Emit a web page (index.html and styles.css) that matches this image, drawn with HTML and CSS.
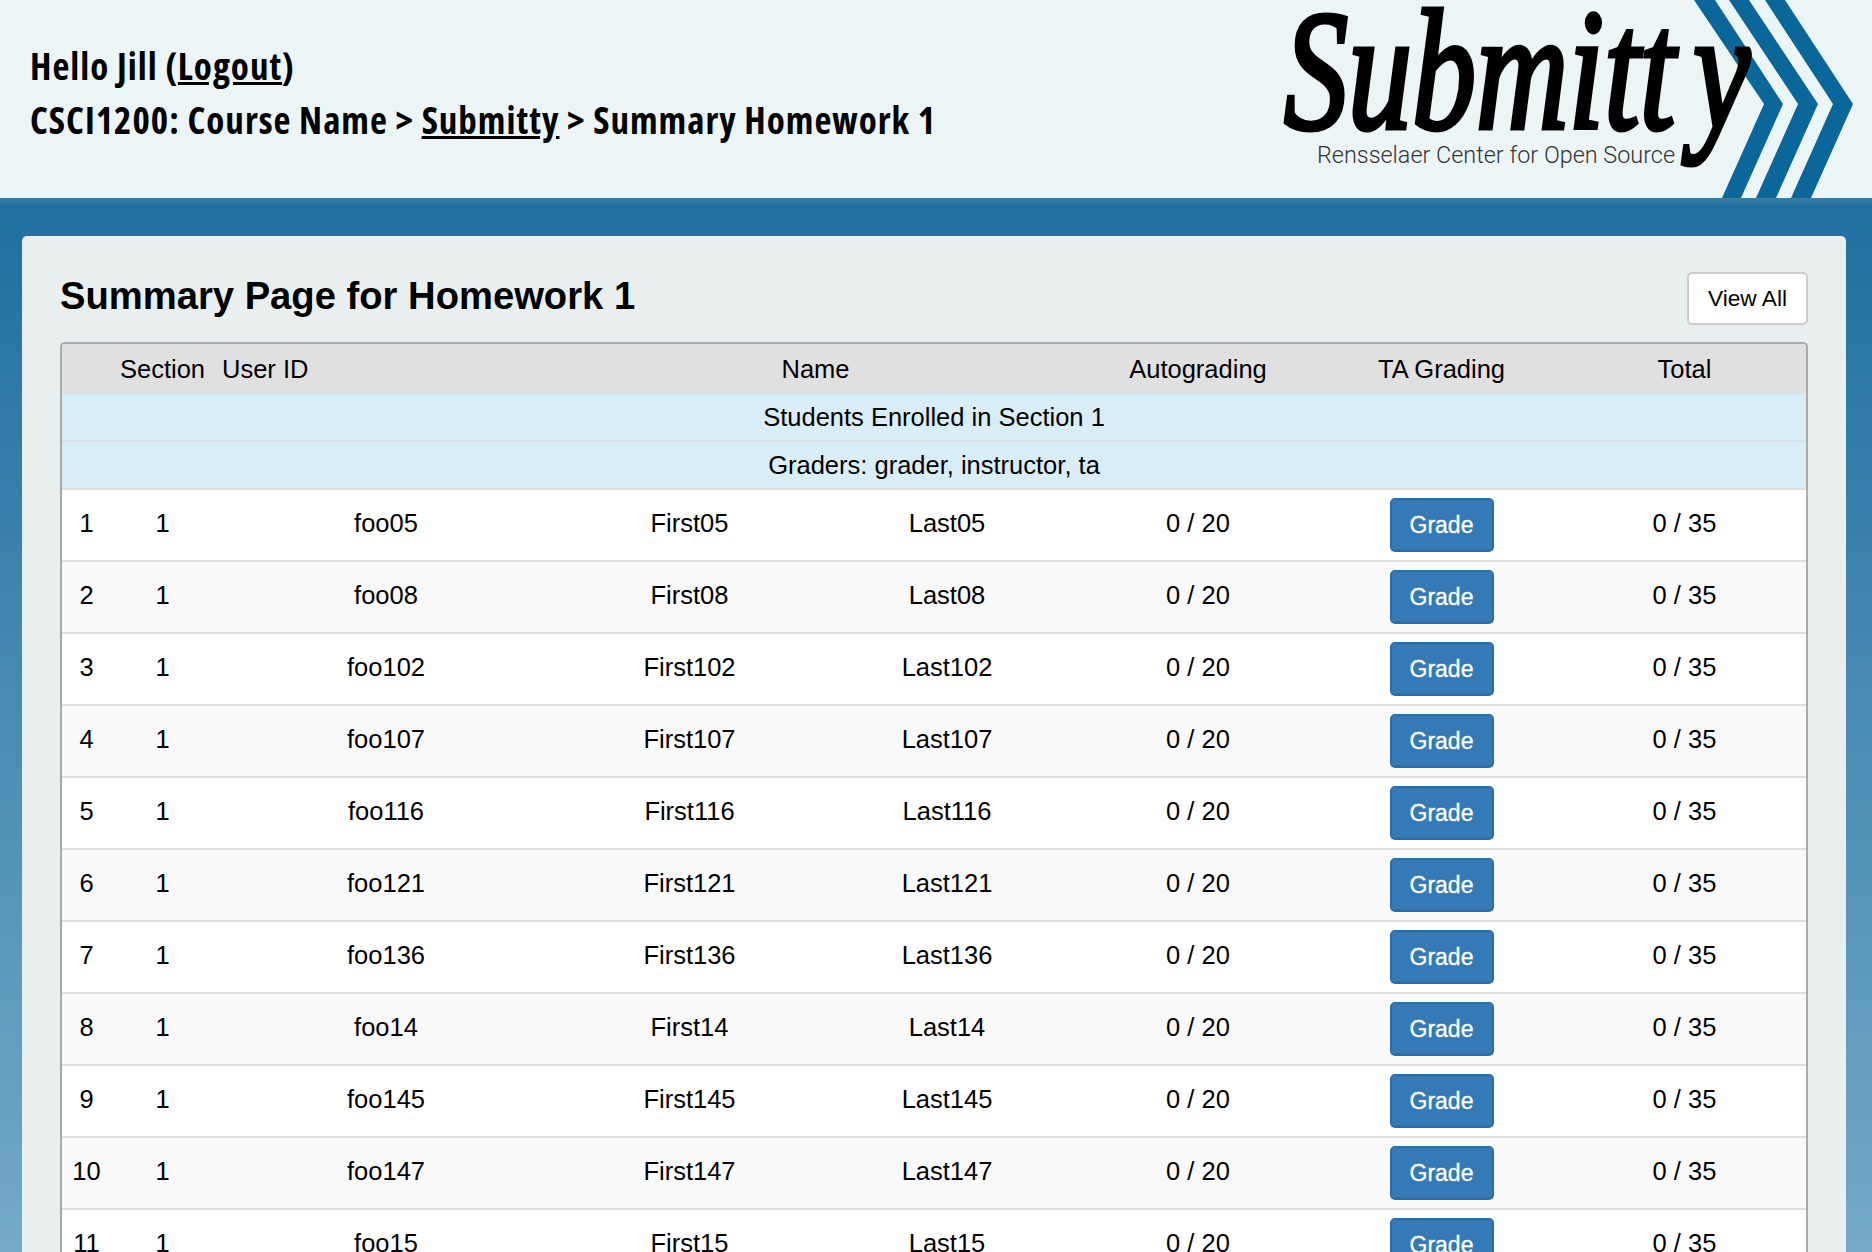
FILE: index.html
```html
<!DOCTYPE html>
<html lang="en">

<head>
    <meta charset="UTF-8">
    <title>Submitty - Summary Page</title>
    <link rel="stylesheet" href="styles.css">
</head>

<body>
    <header class="site-header">
        <div class="breadcrumbs">
            <p>Hello Jill (<a href="#">Logout</a>)</p>
            <p>CSCI1200: Course Name &gt; <a href="#">Submitty</a> &gt; Summary Homework 1</p>
        </div>
        <svg class="logo" viewBox="1272 0 600 198" width="600" height="198">
            <polygon class="chevron" points="1694,0 1715,0 1783,104 1741,198 1722,198 1764,104" />
            <polygon class="chevron" points="1729,0 1749,0 1818,104 1776,198 1756,198 1798,104" />
            <polygon class="chevron" points="1765,0 1785,0 1853,104 1811,198 1791,198 1833,104" />
            <text class="logo-name" x="1284" y="128" textLength="466" lengthAdjust="spacingAndGlyphs">Submitt<tspan dx="24">y</tspan></text>
            <text class="logo-tag" x="1317" y="163" textLength="358" lengthAdjust="spacingAndGlyphs">Rensselaer Center for Open Source</text>
        </svg>
    </header>

    <main class="content">
        <div class="title-row">
            <h1>Summary Page for Homework 1</h1>
            <a class="view-all" href="#">View All</a>
        </div>

        <div class="table-wrap">
            <table class="summary">
                <colgroup>
                    <col class="col-num">
                    <col class="col-section">
                    <col class="col-user">
                    <col class="col-first">
                    <col class="col-last">
                    <col class="col-auto">
                    <col class="col-ta">
                    <col class="col-total">
                </colgroup>
                <thead>
                    <tr>
                        <th></th>
                        <th>Section</th>
                        <th class="left">User ID</th>
                        <th colspan="2">Name</th>
                        <th>Autograding</th>
                        <th>TA Grading</th>
                        <th class="total">Total</th>
                    </tr>
                </thead>
                <tbody>
                    <tr class="info">
                        <td colspan="8">Students Enrolled in Section 1</td>
                    </tr>
                    <tr class="info">
                        <td colspan="8">Graders: grader, instructor, ta</td>
                    </tr>
                    <tr>
                        <td>1</td><td>1</td><td>foo05</td><td>First05</td><td>Last05</td><td>0 / 20</td>
                        <td><a class="grade" href="#">Grade</a></td><td class="total">0 / 35</td>
                    </tr>
                    <tr>
                        <td>2</td><td>1</td><td>foo08</td><td>First08</td><td>Last08</td><td>0 / 20</td>
                        <td><a class="grade" href="#">Grade</a></td><td class="total">0 / 35</td>
                    </tr>
                    <tr>
                        <td>3</td><td>1</td><td>foo102</td><td>First102</td><td>Last102</td><td>0 / 20</td>
                        <td><a class="grade" href="#">Grade</a></td><td class="total">0 / 35</td>
                    </tr>
                    <tr>
                        <td>4</td><td>1</td><td>foo107</td><td>First107</td><td>Last107</td><td>0 / 20</td>
                        <td><a class="grade" href="#">Grade</a></td><td class="total">0 / 35</td>
                    </tr>
                    <tr>
                        <td>5</td><td>1</td><td>foo116</td><td>First116</td><td>Last116</td><td>0 / 20</td>
                        <td><a class="grade" href="#">Grade</a></td><td class="total">0 / 35</td>
                    </tr>
                    <tr>
                        <td>6</td><td>1</td><td>foo121</td><td>First121</td><td>Last121</td><td>0 / 20</td>
                        <td><a class="grade" href="#">Grade</a></td><td class="total">0 / 35</td>
                    </tr>
                    <tr>
                        <td>7</td><td>1</td><td>foo136</td><td>First136</td><td>Last136</td><td>0 / 20</td>
                        <td><a class="grade" href="#">Grade</a></td><td class="total">0 / 35</td>
                    </tr>
                    <tr>
                        <td>8</td><td>1</td><td>foo14</td><td>First14</td><td>Last14</td><td>0 / 20</td>
                        <td><a class="grade" href="#">Grade</a></td><td class="total">0 / 35</td>
                    </tr>
                    <tr>
                        <td>9</td><td>1</td><td>foo145</td><td>First145</td><td>Last145</td><td>0 / 20</td>
                        <td><a class="grade" href="#">Grade</a></td><td class="total">0 / 35</td>
                    </tr>
                    <tr>
                        <td>10</td><td>1</td><td>foo147</td><td>First147</td><td>Last147</td><td>0 / 20</td>
                        <td><a class="grade" href="#">Grade</a></td><td class="total">0 / 35</td>
                    </tr>
                    <tr>
                        <td>11</td><td>1</td><td>foo15</td><td>First15</td><td>Last15</td><td>0 / 20</td>
                        <td><a class="grade" href="#">Grade</a></td><td class="total">0 / 35</td>
                    </tr>
                </tbody>
            </table>
        </div>
    </main>
</body>

</html>
```
FILE: styles.css
```css
html,
body {
    height: 100%;
}

body {
    margin: 0;
    overflow: hidden;
    font-family: 'Liberation Sans', Arial, sans-serif;
    color: #000;
    background: linear-gradient(180deg, #3a7da3 198px, #1f6fa0 206px, #74a9c9 100%);
}

a {
    color: inherit;
}

.site-header {
    display: flex;
    justify-content: space-between;
    align-items: center;
    height: 198px;
    background-color: #ecf5f6;
    overflow: hidden;
}

.breadcrumbs {
    padding: 0 0 12px 30px;
    font-family: 'Open Sans', sans-serif;
    font-size: 37px;
    font-weight: 700;
    font-stretch: 76%;
    letter-spacing: 1px;
    line-height: 54px;
}

.breadcrumbs p {
    margin: 0;
}

.logo {
    flex: none;
}

.chevron {
    fill: #0b6799;
}

.logo-name {
    font-family: 'Liberation Serif', serif;
    font-style: italic;
    font-size: 172px;
    fill: #000;
    stroke: #000;
    stroke-width: 5px;
}

.logo-tag {
    font-family: Roboto, sans-serif;
    font-weight: 300;
    font-size: 24px;
    fill: #333;
}

.content {
    margin: 38px 26px 0 22px;
    padding: 34px 38px 0 38px;
    background-color: #e9efef;
    border-radius: 5px;
}

.title-row {
    display: flex;
    justify-content: space-between;
    align-items: center;
    margin-bottom: 17px;
}

.title-row h1 {
    margin: 0;
    padding-bottom: 4px;
    font-size: 38.2px;
    font-weight: 700;
}

.view-all {
    box-sizing: border-box;
    width: 121px;
    height: 53px;
    margin-top: 2px;
    line-height: 49px;
    text-align: center;
    text-decoration: none;
    font-size: 22.7px;
    background-color: white;
    border: 2px solid #ccc;
    border-radius: 5px;
}

.table-wrap {
    border: 2px solid #aaa;
    border-bottom: none;
    border-radius: 5px 5px 0 0;
    overflow: hidden;
    background-color: white;
}

.summary {
    width: 100%;
    table-layout: fixed;
    border-collapse: collapse;
    font-size: 25.5px;
    text-align: center;
}

.col-num { width: 49px; }
.col-section { width: 103px; }
.col-user { width: 344px; }
.col-first { width: 263px; }
.col-last { width: 252px; }
.col-auto { width: 250px; }
.col-ta { width: 237px; }

.summary th {
    height: 50px;
    padding: 0 8px;
    font-weight: 400;
    background-color: #e0e0e0;
}

.summary th.left {
    text-align: left;
}

.summary td {
    height: 67px;
    padding: 0 0 3px;
    border-top: 2px solid #ddd;
}

.summary th.total {
    padding-left: 11px;
}

.summary td.total {
    padding-left: 3px;
}

.summary tbody tr:nth-child(odd) {
    background-color: white;
}

.summary tbody tr:nth-child(even) {
    background-color: #f9f9f9;
}

.summary tbody tr.info {
    background-color: #d9edf7;
}

.summary tr.info td {
    height: 46px;
    padding: 0;
}

.summary tbody tr:first-child td {
    border-top: none;
}

.grade {
    display: inline-block;
    box-sizing: border-box;
    width: 104px;
    height: 54px;
    margin-top: 3px;
    line-height: 50px;
    vertical-align: middle;
    color: white;
    font-size: 23px;
    text-decoration: none;
    background-color: #337ab7;
    border: 2px solid #2e6da4;
    border-radius: 5px;
    -webkit-text-stroke: 0.3px white;
}
```
